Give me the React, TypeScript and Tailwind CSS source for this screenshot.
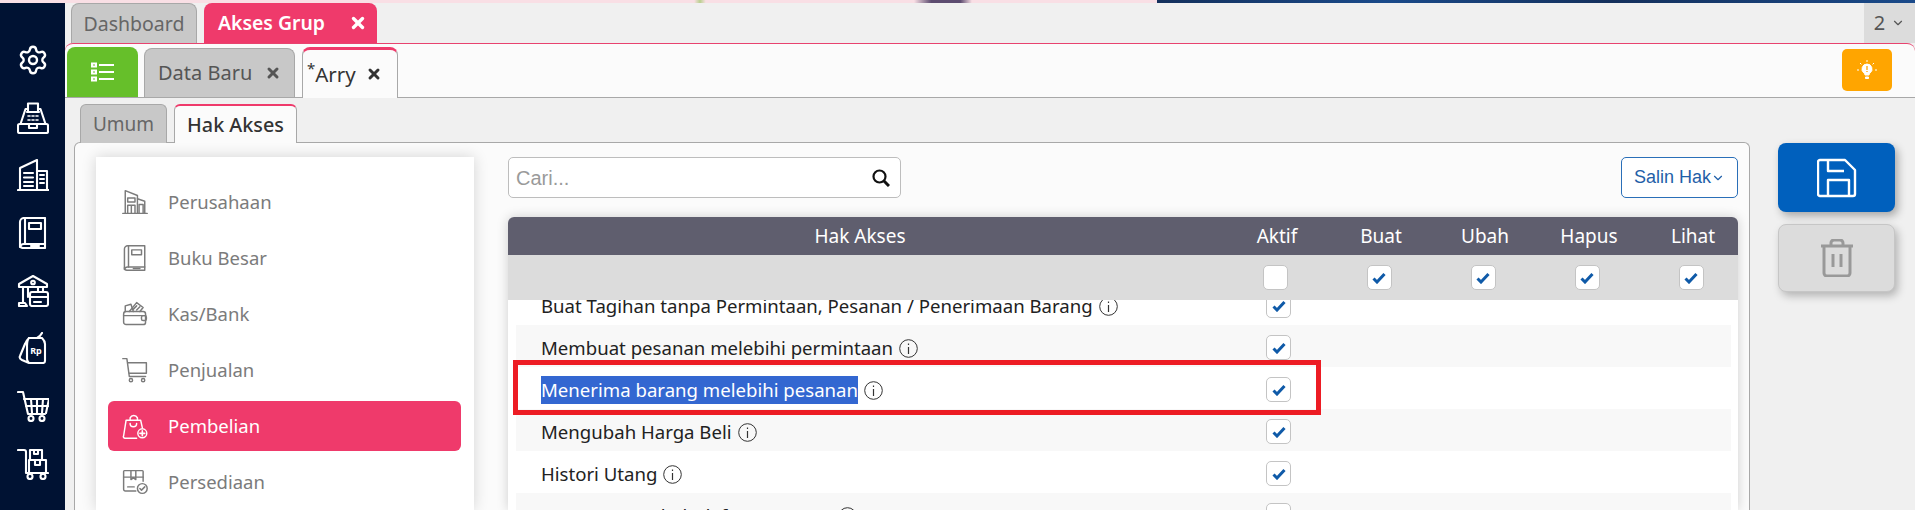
import React from 'react';
import { ChevronDown, Settings, X } from 'lucide-react';

type IconProps = { className?: string; strokeWidth?: number };

const Svg: React.FC<IconProps & { children: React.ReactNode }> = ({ className, strokeWidth = 2.1, children }) => (
  <svg viewBox="0 0 32 32" fill="none" stroke="currentColor" strokeWidth={strokeWidth} strokeLinecap="round" strokeLinejoin="round" className={className}>
    {children}
  </svg>
);

const FaxIcon: React.FC<IconProps> = (p) => (
  <Svg {...p}>
    <path d="M11 10V1.500h10V10" />
    <path d="M11 7H8.500L3.500 22h25L23.500 7H21" />
    <path d="M10 10h12" />
    <rect x="1" y="22" width="30" height="9" rx="1.500" />
    <path d="M12 22v4h8v-4" />
    <path d="M11 14h2M15 14h2M19 14h2M11 18h2M15 18h2M19 18h2" strokeWidth={1.600} />
  </Svg>
);

const CityIcon: React.FC<IconProps> = (p) => (
  <Svg {...p}>
    <path d="M1 31h31" />
    <path d="M3 31V9L20 1v30" />
    <path d="M20 12h10v19" />
    <path d="M7 14h9M7 18.500h9M7 23h9M7 27h9" />
    <path d="M23 16h4M23 20h4M23 24h4" strokeWidth={2} />
  </Svg>
);

const BookIcon: React.FC<IconProps> = (p) => (
  <Svg {...p}>
    <path d="M7 1h21v26H7a4 4 0 0 0-4 3V5a4 4 0 0 1 4-4z" />
    <path d="M3 28a3 3 0 0 0 3 3h22v-4" />
    <path d="M8 1v26" />
    <rect x="12" y="6" width="12" height="6" />
    <path d="M14 29h8" />
  </Svg>
);

const BankIcon: React.FC<IconProps> = (p) => (
  <Svg {...p}>
    <path d="M16 1L2 9v3h28V9z" />
    <circle cx="16" cy="7.500" r="1.800" />
    <path d="M6 12v16M11 12v10M21 12v4M26 12v4" />
    <path d="M2 31v-3h6l2 3H2z" />
    <rect x="13" y="17" width="18" height="14" rx="2" />
    <path d="M13 22h18M17 27h7" />
  </Svg>
);

const TagIcon: React.FC<IconProps> = (p) => (
  <Svg {...p}>
    <path d="M12 6h13c2 2 3 4 3 6v17a2 2 0 0 1-2 2H13" />
    <path d="M12 6c-2 2-3 3-4 6L3 24c-1 2 0 3 2 4l7 3c-1-1-2-2-2-4V14c0-3 0-6 2-8z" />
    <path d="M20 6c2-1 4-3 5-5" />
    <text x="19" y="22" textAnchor="middle" fontFamily="'Noto Sans', sans-serif" fontSize="9" fontWeight="700" fill="currentColor" stroke="none">Rp</text>
  </Svg>
);

const GridCartIcon: React.FC<IconProps> = (p) => (
  <Svg {...p}>
    <path d="M1 2h5l5 22h17" />
    <path d="M7 9h25l-3 14" />
    <path d="M9 16h22M14 9l1 14M20 9v14M26 9l-1 14" />
    <circle cx="14" cy="28.500" r="2.500" />
    <circle cx="25" cy="28.500" r="2.500" />
  </Svg>
);

const TrolleyIcon: React.FC<IconProps> = (p) => (
  <Svg {...p}>
    <path d="M1 2h6a2 2 0 0 1 2 2v21h22" />
    <rect x="13" y="2" width="12" height="10" />
    <rect x="12" y="12" width="17" height="13" />
    <path d="M17 2v4h4V2M18 12v5h5v-5" />
    <circle cx="13" cy="28.500" r="2.500" />
    <circle cx="26" cy="28.500" r="2.500" />
  </Svg>
);

const ShopIcon: React.FC<IconProps> = (p) => (
  <Svg {...p}>
    <path d="M1 30h30" />
    <path d="M4 30V2l15 6v22" />
    <path d="M19 12l9 3v15" />
    <rect x="7" y="11" width="9" height="5" />
    <path d="M7 30V20h9v10M11.500 20v10" />
    <path d="M21 30V19h5v11" />
  </Svg>
);

const WalletIcon: React.FC<IconProps> = (p) => (
  <Svg {...p}>
    <rect x="2" y="13" width="27" height="16" rx="3" />
    <path d="M4 13V6l7-2 3 9" />
    <path d="M9 13l9-11 8 6-4 5" />
    <path d="M14 10l4-4M18 11l4-4" />
    <path d="M2 18h27" />
    <rect x="24" y="18" width="6" height="6" rx="2" />
  </Svg>
);

const CartIcon: React.FC<IconProps> = (p) => (
  <Svg {...p}>
    <path d="M1 2h5l3 22h20" />
    <path d="M7 7h23v13H9" />
    <circle cx="11" cy="28.500" r="2" />
    <circle cx="26" cy="28.500" r="2" />
  </Svg>
);

const BagPlusIcon: React.FC<IconProps> = (p) => (
  <Svg {...p}>
    <path d="M18 31H4a2 2 0 0 1-2-3L5 9h18l2 9" />
    <path d="M10 9V6a5 5 0 0 1 9 0v3" />
    <path d="M10 13a4 4 0 0 0 8 0" />
    <circle cx="25" cy="25" r="5.500" />
    <path d="M25 22v6M22 25h6" strokeWidth={2} />
  </Svg>
);

const BoxCheckIcon: React.FC<IconProps> = (p) => (
  <Svg {...p}>
    <path d="M17 27H4a2 2 0 0 1-2-2V3a1 1 0 0 1 1-1h22a1 1 0 0 1 1 1v12" />
    <path d="M2 10h24M11 2v11l3-2 3 2V2" />
    <path d="M7 22h8" />
    <circle cx="25" cy="24" r="6" />
    <path d="M22 24l2 2 4-4" />
  </Svg>
);

const railIcons = [FaxIcon, CityIcon, BookIcon, BankIcon, TagIcon, GridCartIcon, TrolleyIcon];

const menuItems = [
  { label: 'Perusahaan', icon: ShopIcon },
  { label: 'Buku Besar', icon: BookIcon },
  { label: 'Kas/Bank', icon: WalletIcon },
  { label: 'Penjualan', icon: CartIcon },
  { label: 'Pembelian', icon: BagPlusIcon, active: true },
  { label: 'Persediaan', icon: BoxCheckIcon },
];

const rows = [
  { label: 'Buat Tagihan tanpa Permintaan, Pesanan / Penerimaan Barang', checked: true },
  { label: 'Membuat pesanan melebihi permintaan', checked: true },
  { label: 'Menerima barang melebihi pesanan', checked: true, marked: true },
  { label: 'Mengubah Harga Beli', checked: true },
  { label: 'Histori Utang', checked: true },
  { label: 'Dapat mengubah daftar pesanan', checked: false },
];

const Checkbox: React.FC<{ checked: boolean }> = ({ checked }) => (
  <span className="flex h-[25px] w-[25px] items-center justify-center rounded-[5px] border border-[#c4c4c4] bg-white">
    {checked && (
      <svg viewBox="0 0 14 12" className="h-[12px] w-[14px]" fill="none" stroke="#0f5aa8" strokeWidth="3">
        <polyline points="1.500 6.500 5 10 12.500 2" />
      </svg>
    )}
  </span>
);

const InfoIcon = () => (
  <svg viewBox="0 0 19 19" className="ml-[6px] h-[19px] w-[19px] shrink-0" fill="none" stroke="#333" strokeWidth="1">
    <circle cx="9.500" cy="9.500" r="8.800" />
    <path d="M9.500 8v7" strokeWidth="1.200" />
    <path d="M9.500 4.500v1.500" strokeWidth="1.200" />
  </svg>
);

export default function App() {
  return (
    <div className="flex h-[510px] w-[1915px] flex-col overflow-hidden bg-[#f0f0f0] font-['Noto_Sans',sans-serif] text-[18.500px]">
      <div className="flex h-[3px] shrink-0">
        <div className="w-[1157px] bg-[linear-gradient(90deg,#f9dfe5_60%,#b9cf8e_60.500%,#f9dfe5_61%,#f9dfe5_79%,#5d4c70_80.500%,#5d4c70_83%,#f9dfe5_84%)]" />
        <div className="flex-1 bg-[linear-gradient(90deg,#14305c,#1a4a8a_30%,#14305c_60%,#1a4a8a)]" />
      </div>

      <div className="flex min-h-0 flex-1">
        <aside className="flex w-[65px] shrink-0 flex-col items-center gap-[25.700px] bg-[#001233] pt-[41px] text-white">
          <Settings size={32} strokeWidth={1.800} />
          {railIcons.map((Icon, i) => (
            <Icon key={i} className="h-[32px] w-[32px]" />
          ))}
        </aside>

        <main className="flex min-w-0 flex-1 flex-col">
          {/* page tabs */}
          <div className="flex h-[40px] shrink-0 items-stretch gap-[7px] pl-[6px]">
            <div className="flex w-[126px] items-center justify-center rounded-t-lg border border-b-0 border-[#a8a8a8] bg-[#c8c8c8] text-[19.500px] text-[#666]">
              Dashboard
            </div>
            <div className="flex w-[173px] items-center gap-[24px] rounded-t-lg bg-[#ef3a6b] pl-[14px] text-[19.400px] font-semibold text-white">
              Akses Grup
              <X size={18} strokeWidth={4.500} />
            </div>
            <div className="ml-auto flex w-[51px] items-center justify-center gap-[6px] bg-[#dcdcdc] text-[20px] text-[#555]">
              2
              <ChevronDown size={14} />
            </div>
          </div>

          {/* document tabs */}
          <div className="flex h-[55px] shrink-0 items-end gap-[6px] rounded-t-lg border-t border-b border-t-[#e8436f] border-b-[#a8a8a8] bg-[#fbfbfb] pl-[2px] pr-[23px]">
            <div className="flex h-[50px] w-[71px] items-center justify-center rounded-t-lg bg-[#66bf2a] text-white">
              <svg viewBox="0 0 24 20" className="h-[20px] w-[24px]" fill="none" stroke="currentColor" strokeWidth="2">
                <rect x="1" y="1.500" width="4" height="3" />
                <rect x="1" y="8.500" width="4" height="3" />
                <rect x="1" y="15.500" width="4" height="3" />
                <path d="M8 3h15M8 10h15M8 17h15" />
              </svg>
            </div>
            <div className="flex h-[49px] w-[151px] items-center gap-[13px] rounded-t-lg border border-b-0 border-[#a8a8a8] bg-[#c8c8c8] pl-[13px] text-[20px] text-[#555]">
              Data Baru
              <X size={16} strokeWidth={4.500} />
            </div>
            <div className="relative -mb-px ml-px flex h-[51px] w-[96px] items-center rounded-t-lg border border-b-0 border-t-[3px] border-[#a8a8a8] border-t-[#ef3a6b] bg-[#fbfbfb] pl-[4px] text-[20.500px] text-[#333]">
              <span className="-mt-[12px] text-[15px]">*</span>
              <span>Arry</span>
              <X size={16} strokeWidth={4.500} className="ml-[10px]" />
            </div>
            <div className="mb-[6px] ml-auto flex h-[42px] w-[50px] items-center justify-center rounded-[5px] bg-[#ffa500] text-white">
              <svg viewBox="0 0 20 20" className="h-[20px] w-[20px]" fill="none" stroke="currentColor" strokeWidth="1">
                <path d="M10 4a5 5 0 0 0-3 9c.6.5 1 1.200 1 2h4c0-.8.4-1.500 1-2a5 5 0 0 0-3-9z" fill="currentColor" />
                <path d="M8.500 17h3v1.500h-3z" fill="currentColor" />
                <path d="M10 6v4M10 11v1" stroke="#ffa500" strokeWidth="1.300" />
                <path d="M10 0v2M3 3l1.400 1.400M17 3l-1.400 1.400M0 10h2M18 10h2" />
              </svg>
            </div>
          </div>

          {/* body */}
          <div className="flex min-h-0 flex-1 pl-[9px] pt-[6px]">
            <div className="flex w-[1676px] shrink-0 flex-col">
              <div className="relative z-10 -mb-px ml-[6px] flex h-[39px] gap-[7px]">
                <div className="flex w-[87px] items-center justify-center rounded-t-md border border-b-0 border-[#a8a8a8] bg-[#c8c8c8] text-[19px] text-[#666]">
                  Umum
                </div>
                <div className="flex w-[123px] items-center justify-center rounded-t-md border border-b-0 border-t-2 border-[#a8a8a8] border-t-[#ef3a6b] bg-[#fbfbfb] text-[19.800px] font-medium text-[#333]">
                  Hak Akses
                </div>
              </div>

              <section className="flex min-h-0 flex-1 gap-[34px] rounded-t-md border border-b-0 border-[#a8a8a8] bg-[#fbfbfb] pl-[21px] pr-[11px] pt-[14px]">
                <nav className="flex w-[378px] shrink-0 flex-col gap-[6px] bg-white pl-[12px] pr-[13px] pt-[20px] shadow-[0_0_14px_rgba(0,0,0,0.16)]">
                  {menuItems.map(({ label, icon: Icon, active }) => (
                    <div
                      key={label}
                      className={`flex h-[50px] shrink-0 items-center gap-[20px] rounded-md pl-[14px] ${active ? 'bg-[#ef3a6b] text-white' : 'text-[#7b7b7b]'}`}
                    >
                      <Icon className="h-[26px] w-[26px]" strokeWidth={1.800} />
                      {label}
                    </div>
                  ))}
                </nav>

                <div className="flex min-w-0 flex-1 flex-col">
                  <div className="flex h-[41px] shrink-0 items-stretch justify-between">
                    <div className="flex w-[393px] items-center rounded-[5px] border border-[#bdbdbd] bg-white pl-[7px] pr-[10px]">
                      <input
                        placeholder="Cari..."
                        className="min-w-0 flex-1 bg-transparent font-['Liberation_Sans',sans-serif] text-[20px] outline-none placeholder:text-[#9a9a9a]"
                      />
                      <svg viewBox="0 0 18 18" className="h-[18px] w-[18px]" fill="none" stroke="#111" strokeWidth="2.200">
                        <circle cx="7.500" cy="7.500" r="6" />
                        <path d="M12 12l5 5" strokeWidth="3" />
                      </svg>
                    </div>
                    <button className="flex w-[117px] items-center justify-center rounded-[5px] border border-[#2a6fb8] bg-white font-['Liberation_Sans',sans-serif] text-[18px] text-[#1f5fa8]">
                      Salin Hak
                      <ChevronDown size={14} />
                    </button>
                  </div>

                  <div className="mt-[19px] flex min-h-0 flex-1 flex-col overflow-hidden rounded-t-md shadow-[0_0_12px_rgba(0,0,0,0.18)]">
                    <div className="flex h-[38px] shrink-0 items-center bg-[#5f5e6e] text-[19px] text-white">
                      <span className="w-[717px] shrink-0 pr-[13px] text-center">Hak Akses</span>
                      {['Aktif', 'Buat', 'Ubah', 'Hapus', 'Lihat'].map((h) => (
                        <span key={h} className="w-[104px] shrink-0 text-center">{h}</span>
                      ))}
                    </div>
                    <div className="flex h-[45px] shrink-0 items-center bg-[#dcdcdc]">
                      <span className="w-[715px] shrink-0" />
                      {[false, true, true, true, true].map((c, i) => (
                        <span key={i} className="flex w-[104px] shrink-0 justify-center">
                          <Checkbox checked={c} />
                        </span>
                      ))}
                    </div>
                    <div className="min-h-0 flex-1 overflow-hidden bg-white pl-[8px] pr-[7px]">
                      <div className="-mt-[17px]">
                        {rows.map((r, i) => (
                          <div
                            key={r.label}
                            className={`relative flex h-[42px] items-start text-[#222] ${i % 2 === 1 ? 'bg-[#f8f8f8]' : 'bg-white'}`}
                          >
                            <div className="flex h-[46px] w-[750px] shrink-0 items-center pl-[25px] text-[18.600px]">
                              {r.marked ? <span className="bg-[#3367d1] text-white">{r.label}</span> : r.label}
                              <InfoIcon />
                            </div>
                            <div className="pt-[10px]">
                              <Checkbox checked={r.checked} />
                            </div>
                            {r.marked && (
                              <div className="absolute -left-[3px] -top-[7px] z-10 h-[55px] w-[808px] border-[5px] border-[#ed1c24]" />
                            )}
                          </div>
                        ))}
                      </div>
                    </div>
                  </div>
                </div>
              </section>
            </div>

            <div className="ml-[28px] flex w-[117px] shrink-0 flex-col gap-[12px] pt-[39px]">
              <button className="flex h-[69px] items-center justify-center rounded-lg bg-[#0060bd] text-white shadow-[3px_4px_8px_rgba(0,0,0,0.3)]">
                <svg viewBox="0 0 40 40" className="h-[40px] w-[40px]" fill="none" stroke="currentColor" strokeWidth="2.400" strokeLinejoin="round">
                  <path d="M3 2h25l10 10v24a2 2 0 0 1-2 2H3a2 2 0 0 1-2-2V4a2 2 0 0 1 2-2z" />
                  <path d="M11 2v11h16" />
                  <path d="M11 38V22h21v16" />
                </svg>
              </button>
              <button className="flex h-[68px] items-center justify-center rounded-lg border border-[#c6c6c6] bg-[#dcdcdc] text-[#999] shadow-[3px_4px_8px_rgba(0,0,0,0.25)]">
                <svg viewBox="0 0 34 38" className="h-[38px] w-[34px]" fill="none" stroke="currentColor" strokeWidth="3" strokeLinejoin="round">
                  <path d="M1 7h32" />
                  <path d="M11 7V4a3 3 0 0 1 3-3h6a3 3 0 0 1 3 3v3" />
                  <path d="M4 7v27a3 3 0 0 0 3 3h20a3 3 0 0 0 3-3V7" />
                  <path d="M13 15v13M21 15v13" />
                </svg>
              </button>
            </div>
          </div>
        </main>
      </div>
    </div>
  );
}
